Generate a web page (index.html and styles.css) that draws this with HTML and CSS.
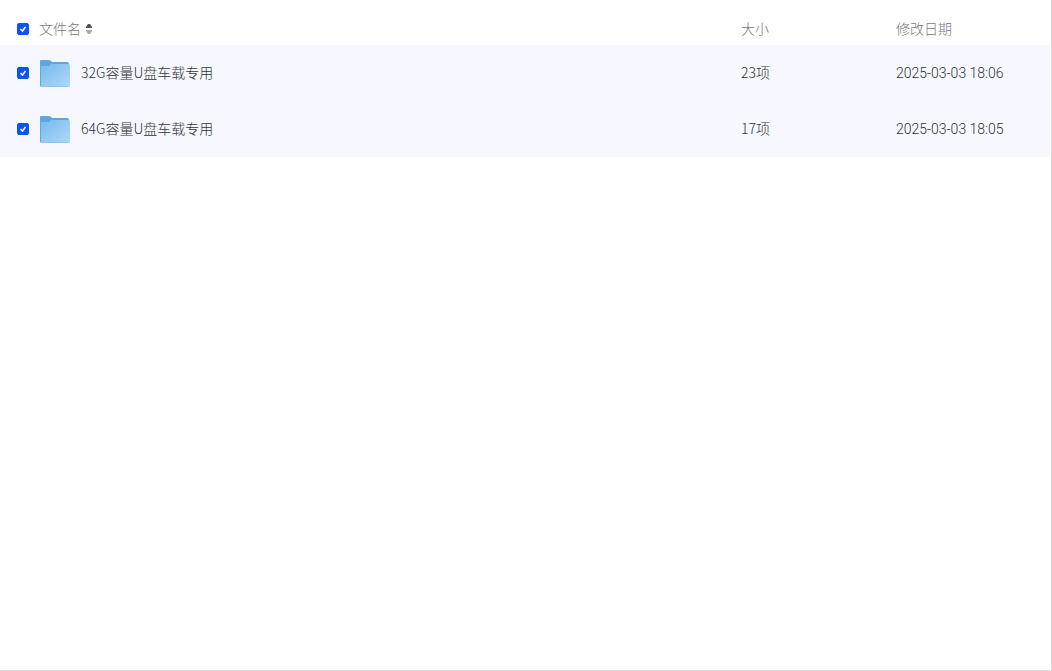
FILE: index.html
```html
<!DOCTYPE html>
<html lang="zh-CN">
<head>
  <meta charset="UTF-8">
  <meta name="viewport" content="width=device-width,initial-scale=1.0">
  <title>文件列表</title>
  <link rel="stylesheet" href="styles.css">
</head>
<body>
  <!-- Общие иконки -->
  <svg class="icon-defs" width="0" height="0" aria-hidden="true">
    <defs>
      <linearGradient id="folder-front" x1="0" y1="0" x2="1" y2="1">
        <stop offset="0" stop-color="#79baec"/>
        <stop offset="1" stop-color="#acd8fb"/>
      </linearGradient>
      <symbol id="folder" viewBox="0 0 30 28">
        <path d="M0 2Q0 1 1 1H9Q10 1 11 2L12 3H27Q29 3 29 5V12H0Z" fill="#5fa7dd"/>
        <path d="M1 7H9L11 5H28Q30 5 30 7V27Q30 28 29 28H1Q0 28 0 27V8Q0 7 1 7Z" fill="url(#folder-front)"/>
        <path d="M0.500 3V27" fill="none" stroke="#62a9dd" stroke-width="1"/>
        <path d="M1 27.500H29" fill="none" stroke="#8cc3ee" stroke-width="1"/>
        <path d="M22 11.500H26" fill="none" stroke="#95cbf4" stroke-width="1"/>
      </symbol>
    </defs>
  </svg>

  <main class="file-panel">
    <table class="file-table">
      <thead>
        <tr>
          <th class="col-check"><input type="checkbox" aria-label="全选" checked></th>
          <th class="col-name">
            <button type="button" class="sort-btn">
              <span class="cell-text">文件名</span>
              <svg class="sort-icon" width="8" height="12" viewBox="0 0 8 12" aria-hidden="true">
                <path d="M1 5V4L3 1H5L7 4V5Z" fill="#505256"/>
                <path d="M1 7H7V8L5 11H3L1 8Z" fill="#a8aaae"/>
              </svg>
            </button>
          </th>
          <th class="col-size"><span class="cell-text">大小</span></th>
          <th class="col-date"><span class="cell-text">修改日期</span></th>
        </tr>
      </thead>
      <tbody>
        <tr>
          <td class="col-check"><input type="checkbox" id="file-1" checked></td>
          <td class="col-name">
            <label class="file-name" for="file-1">
              <svg class="folder-icon" aria-hidden="true"><use href="#folder"/></svg>
              <span class="cell-text">32G容量U盘车载专用</span>
            </label>
          </td>
          <td class="col-size"><span class="cell-text">23项</span></td>
          <td class="col-date"><time datetime="2025-03-03 18:06">2025-03-03 18:06</time></td>
        </tr>
        <tr>
          <td class="col-check"><input type="checkbox" id="file-2" checked></td>
          <td class="col-name">
            <label class="file-name" for="file-2">
              <svg class="folder-icon" aria-hidden="true"><use href="#folder"/></svg>
              <span class="cell-text">64G容量U盘车载专用</span>
            </label>
          </td>
          <td class="col-size"><span class="cell-text">17项</span></td>
          <td class="col-date"><time datetime="2025-03-03 18:05">2025-03-03 18:05</time></td>
        </tr>
      </tbody>
    </table>
  </main>
</body>
</html>
```
FILE: styles.css
```css
* {
  box-sizing: border-box;
}

body {
  margin: 0;
  background-color: #ffffff;
  color: #303236;
  font-family: "Noto Sans CJK SC", sans-serif;
  font-size: 14px;
  font-weight: 300;
  line-height: 20px;
}

.icon-defs {
  position: absolute;
}

.file-panel {
  min-height: 100vh;
  padding-top: 13px;
  border-right: 1px solid #dcdcdc;
  border-bottom: 1px solid #dcdcdc;
}

.file-table {
  width: 100%;
  border-collapse: collapse;
  table-layout: fixed;
}
.file-table th,
.file-table td {
  padding: 0;
  text-align: left;
  font-weight: 300;
  white-space: nowrap;
}
.file-table th {
  height: 32px;
  color: #76787c;
}
.file-table td {
  height: 56px;
  background-color: #f6f7ff;
}
.file-table .col-check {
  width: 39px;
  padding-left: 17px;
}
.file-table .col-size {
  width: 155px;
}
.file-table .col-date {
  width: 155px;
}
.file-table td.col-date {
  font-family: Roboto, "Noto Sans CJK SC", sans-serif;
}

.cell-text {
  display: block;
  padding-bottom: 2px;
}

input[type="checkbox"] {
  display: block;
  appearance: none;
  width: 12px;
  height: 12px;
  margin: 0;
  border: 1px solid #c0c4cc;
  border-radius: 2px;
  background-color: #ffffff;
  cursor: pointer;
}
input[type="checkbox"]:checked {
  border-color: #0a54f5;
  background: #0a54f5 url("data:image/svg+xml,%3Csvg xmlns='http://www.w3.org/2000/svg' viewBox='0 0 10 10'%3E%3Cpath d='M2.500 5L4.500 7L7.500 3' fill='none' stroke='white' stroke-width='1.500'/%3E%3C/svg%3E") center / 10px 10px no-repeat;
}

.sort-btn {
  display: flex;
  align-items: center;
  gap: 4px;
  padding: 0;
  border: none;
  background: none;
  color: inherit;
  font: inherit;
  cursor: pointer;
}

.file-name {
  display: flex;
  align-items: center;
  gap: 11px;
  padding-left: 1px;
  cursor: pointer;
}
.folder-icon {
  width: 30px;
  height: 28px;
}
```
